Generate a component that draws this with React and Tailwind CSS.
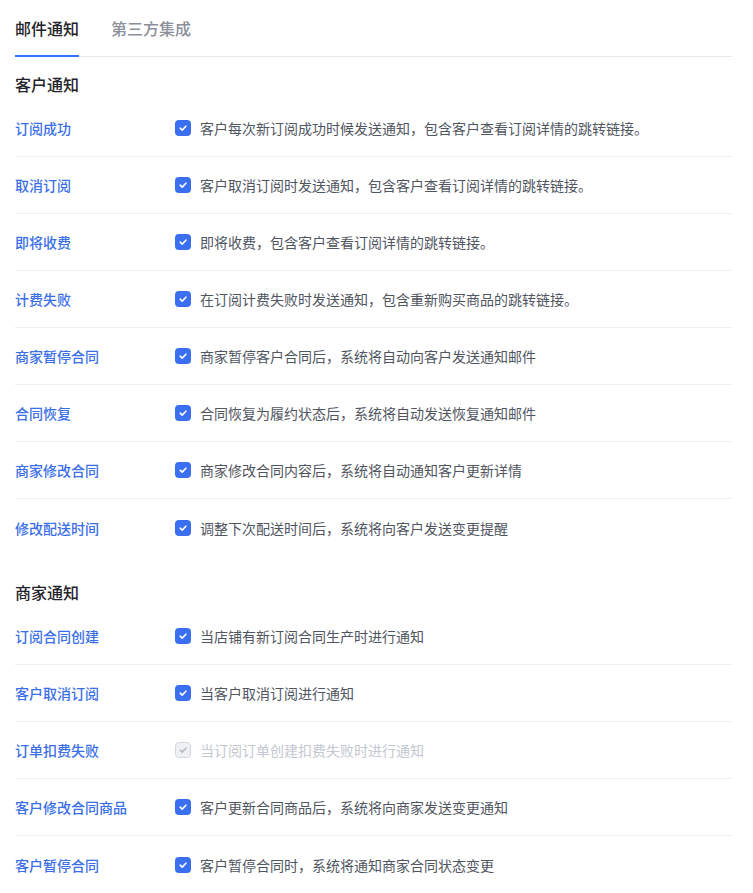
const customerRows = [
  { label: '订阅成功', desc: '客户每次新订阅成功时候发送通知，包含客户查看订阅详情的跳转链接。' },
  { label: '取消订阅', desc: '客户取消订阅时发送通知，包含客户查看订阅详情的跳转链接。' },
  { label: '即将收费', desc: '即将收费，包含客户查看订阅详情的跳转链接。' },
  { label: '计费失败', desc: '在订阅计费失败时发送通知，包含重新购买商品的跳转链接。' },
  { label: '商家暂停合同', desc: '商家暂停客户合同后，系统将自动向客户发送通知邮件' },
  { label: '合同恢复', desc: '合同恢复为履约状态后，系统将自动发送恢复通知邮件' },
  { label: '商家修改合同', desc: '商家修改合同内容后，系统将自动通知客户更新详情' },
  { label: '修改配送时间', desc: '调整下次配送时间后，系统将向客户发送变更提醒' },
]

const merchantRows = [
  { label: '订阅合同创建', desc: '当店铺有新订阅合同生产时进行通知' },
  { label: '客户取消订阅', desc: '当客户取消订阅进行通知' },
  { label: '订单扣费失败', desc: '当订阅订单创建扣费失败时进行通知', disabled: true },
  { label: '客户修改合同商品', desc: '客户更新合同商品后，系统将向商家发送变更通知' },
  { label: '客户暂停合同', desc: '客户暂停合同时，系统将通知商家合同状态变更' },
]

const Check = ({ disabled }) => (
  <span
    className={
      'flex h-4 w-4 shrink-0 items-center justify-center rounded-[4px] ' +
      (disabled ? 'border border-[#d3d6dd] bg-[#eef0f4]' : 'bg-[#3a6ff2]')
    }
  >
    <svg width="10" height="10" viewBox="0 0 10 10" fill="none">
      <path
        d="M2.2 5.2 4.2 7.1 7.9 3.2"
        stroke={disabled ? '#b4b9c3' : '#ffffff'}
        strokeWidth="1.6"
        strokeLinecap="round"
        strokeLinejoin="round"
      />
    </svg>
  </span>
)

const Section = ({ title, rows }) => (
  <div>
    <div className="pt-[16px] pb-[5px] text-base leading-[22px] font-medium text-[#1f2329]">{title}</div>
    {rows.map((r, i) => (
      <div
        key={r.label}
        className={
          'flex h-[57px] items-center text-sm ' +
          (i < rows.length - 1 ? 'border-b border-[#eceef2]' : '')
        }
      >
        <div className="w-[160px] font-medium text-[#3b6fe8]">{r.label}</div>
        <Check disabled={r.disabled} />
        <div className={'ml-[9px] ' + (r.disabled ? 'text-[#c3c7cf]' : 'text-[#50555f]')}>{r.desc}</div>
      </div>
    ))}
  </div>
)

export default function App() {
  return (
    <div
      className="min-h-screen bg-white pl-[15px] pr-[21px]"
      style={{ fontFamily: '"Noto Sans CJK SC", "Noto Sans", sans-serif' }}
    >
      <div className="flex h-[57px] gap-8 border-b border-[#e8eaee] text-base font-medium">
        <div className="relative flex items-center text-[#1f2329]">
          邮件通知
          <span className="absolute bottom-[-1px] left-0 h-[2px] w-full bg-[#3370ff]" />
        </div>
        <div className="flex items-center text-[#8a8f99]">第三方集成</div>
      </div>
      <Section title="客户通知" rows={customerRows} />
      <div className="h-[9px]" />
      <Section title="商家通知" rows={merchantRows} />
    </div>
  )
}
